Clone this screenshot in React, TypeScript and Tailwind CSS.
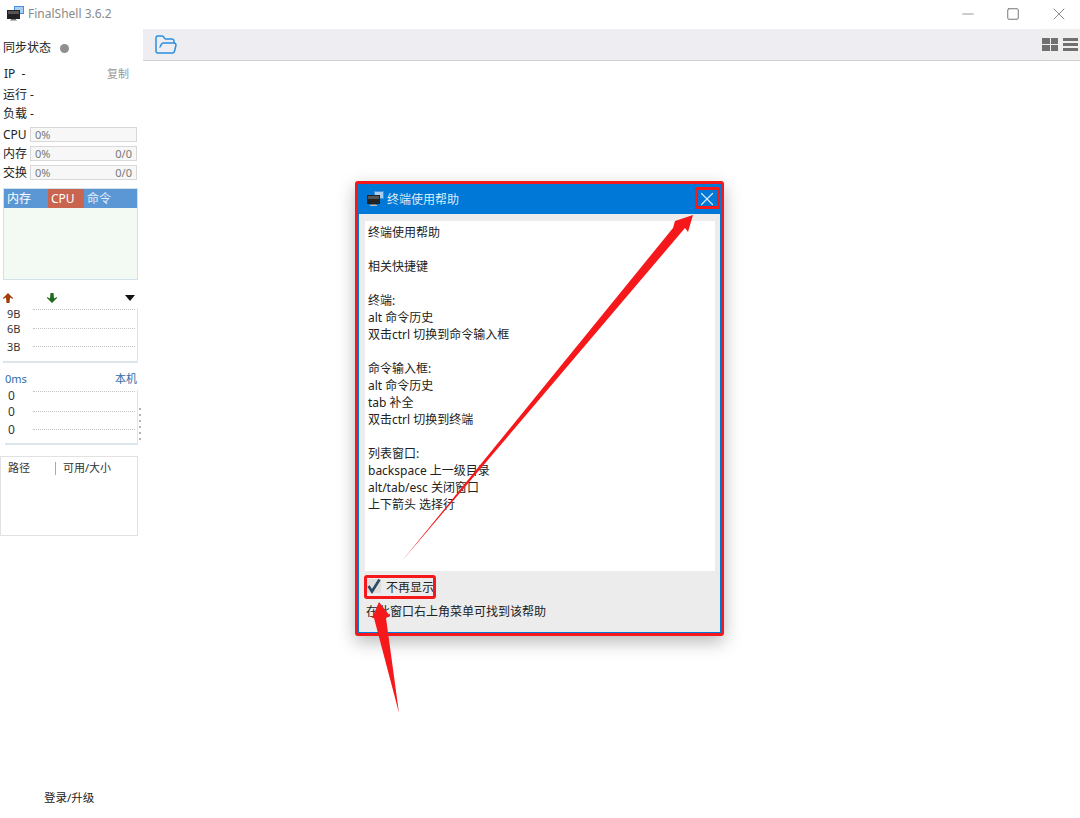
import { Minus, Square, X, FolderOpen } from "lucide-react";

const FONT = "[font-family:'Noto_Sans','Noto_Sans_CJK_SC',sans-serif]";

function MonitorIcon() {
  return (
    <svg width="17" height="16" viewBox="0 0 17 16" className="shrink-0">
      <rect x="7" y="0" width="10" height="8" fill="#4a90d9" />
      <rect x="8" y="1" width="8" height="6" fill="#a9d0f2" />
      <rect x="0" y="4" width="13" height="9" fill="#222" />
      <rect x="1" y="5" width="11" height="3" fill="#555" />
      <rect x="4" y="13" width="5" height="1" fill="#777" />
      <rect x="3" y="14" width="7" height="1" fill="#bbb" />
    </svg>
  );
}

function UsageBar({ label, right }: { label: string; right?: string }) {
  return (
    <div className="flex items-center h-[15px] mb-1">
      <span className="w-[27px] text-[12px] text-[#222] leading-none">{label}</span>
      <div className="w-[107px] h-[15px] border border-[#d8d8d8] bg-[#f7f7f7] flex items-center justify-between px-1 text-[11px] text-[#777] leading-none">
        <span>0%</span>
        {right && <span>{right}</span>}
      </div>
    </div>
  );
}

function ChartRow({ label, height, labelClass, labelWidth }: { label: string; height: string; labelClass: string; labelWidth: string }) {
  return (
    <div className={`flex ${height}`}>
      <span className={`${labelWidth} ${labelClass} h-[12px] leading-[12px]`}>{label}</span>
      <div className="flex-1 mr-[2px] border-t border-dotted border-[#c4c4c4]" />
    </div>
  );
}

function Sidebar() {
  return (
    <aside className="w-[143px] shrink-0 flex flex-col relative">
      <div className="h-[35px] pt-[3px] pl-[3px] flex items-center text-[12px] text-[#222]">
        同步状态
        <span className="ml-[9px] w-[9px] h-[9px] rounded-full bg-[#8f8f8f]" />
      </div>
      <div className="h-[20px] pl-[4px] pr-[14px] flex items-center justify-between text-[12px] text-[#222]">
        <span>IP&nbsp;&nbsp;-</span>
        <span className="text-[#999] text-[11px]">复制</span>
      </div>
      <div className="h-[22px] pl-[3px] flex items-center text-[12px] text-[#222]">运行 -</div>
      <div className="h-[15px] pl-[3px] flex items-center text-[12px] text-[#222]">负载 -</div>
      <div className="pl-[3px] mt-[6px]">
        <UsageBar label="CPU" />
        <UsageBar label="内存" right="0/0" />
        <UsageBar label="交换" right="0/0" />
      </div>

      {/* process table */}
      <div className="ml-[3px] w-[135px] h-[92px] mt-[4px] border border-[#d3e2ea] bg-[#f3f9f3]">
        <div className="h-[19px] bg-[#5b97d5] flex text-[12px] text-white leading-[19px]">
          <span className="w-[44px] pl-[3px]">内存</span>
          <span className="w-[36px] bg-[#c9644f] pl-[3px]">CPU</span>
          <span className="pl-[3px] text-[#e4f0fa]">命令</span>
        </div>
      </div>

      {/* network */}
      <div className="h-[18px] mt-[9px] flex items-center">
        <svg width="12" height="12" viewBox="0 0 12 12" className="ml-[2px]">
          <path d="M6 1 L11 6 L11 7 L8 5.5 L7.5 11 L4.5 11 L4 5.5 L1 7 L1 6 Z" fill="#a33a08" />
        </svg>
        <svg width="12" height="12" viewBox="0 0 12 12" className="ml-[32px]">
          <path d="M6 11 L11 6 L11 5 L8 6.5 L7.5 1 L4.5 1 L4 6.5 L1 5 L1 6 Z" fill="#1f6a1f" />
        </svg>
        <svg width="10" height="6" viewBox="0 0 10 6" className="ml-[67px]">
          <path d="M0 0 H10 L5 6 Z" fill="#111" />
        </svg>
      </div>
      <div className="ml-[3px] w-[135px] h-[55px] mt-[1px] pt-[1px] border-r border-b-2 border-[#dbe5ea] text-[11px] text-[#333]">
        <ChartRow label="9B" height="h-[19px]" labelWidth="w-[30px]" labelClass="pl-[4px] -mt-[1px]" />
        <ChartRow label="6B" height="h-[18px]" labelWidth="w-[30px]" labelClass="pl-[4px] -mt-[5px]" />
        <ChartRow label="3B" height="h-[15px]" labelWidth="w-[30px]" labelClass="pl-[4px] -mt-[5px]" />
      </div>

      {/* ping */}
      <div className="h-[18px] mt-[7px] pl-[5px] pr-[6px] flex items-center justify-between text-[11px] text-[#2f6da8]">
        <span>0ms</span>
        <span>本机</span>
      </div>
      <div className="ml-[5px] w-[133px] h-[55px] mt-[2px] pt-[1px] border-r border-b-2 border-[#dbe5ea] text-[12px] text-[#333]">
        <ChartRow label="0" height="h-[20px]" labelWidth="w-[28px]" labelClass="pl-[3px] -mt-[1px]" />
        <ChartRow label="0" height="h-[18px]" labelWidth="w-[28px]" labelClass="pl-[3px] -mt-[5px]" />
        <ChartRow label="0" height="h-[14px]" labelWidth="w-[28px]" labelClass="pl-[3px] -mt-[5px]" />
      </div>

      {/* drag handle */}
      <div className="absolute left-[139px] top-[379px] flex flex-col gap-[4px]">
        {[0, 1, 2, 3, 4, 5].map((i) => (
          <span key={i} className="w-[2px] h-[2px] bg-[#b4b4b4]" />
        ))}
      </div>

      {/* disk table */}
      <div className="w-[138px] h-[80px] mt-[11px] border border-[#e2e2e2] pt-[4px]">
        <div className="flex items-center h-[14px] text-[11px] text-[#333]">
          <span className="w-[54px] pl-[7px]">路径</span>
          <span className="h-[13px] border-l border-[#aaa]" />
          <span className="pl-[7px]">可用/大小</span>
        </div>
      </div>

      <div className="mt-auto h-[40px] pl-[44px] flex items-center text-[11.5px] text-[#222]">登录/升级</div>
    </aside>
  );
}

const HELP = `终端使用帮助

相关快捷键

终端:
alt 命令历史
双击ctrl 切换到命令输入框

命令输入框:
alt 命令历史
tab 补全
双击ctrl 切换到终端

列表窗口:
backspace 上一级目录
alt/tab/esc 关闭窗口
上下箭头 选择行`;

function HelpDialog() {
  return (
    <div className="absolute left-[355px] top-[181px] w-[369px] h-[455px] border-[3px] border-[#f5191b] rounded-[3px] shadow-[0_6px_18px_rgba(0,0,0,0.28)] bg-[#ececec] flex flex-col">
      <div className="flex-1 flex flex-col border-x border-b border-[#0078d7]">
        <div className="h-[30px] bg-[#0078d7] flex items-center pl-[8px] pr-[2px] text-[12px] text-[#dcecf9]">
          <MonitorIcon />
          <span className="ml-[3px] mt-[2px]">终端使用帮助</span>
          <X className="ml-auto text-[#d5e8f7]" size={22} strokeWidth={1.3} />
        </div>
        <div className="mt-[7px] ml-[6px] mr-[5px] h-[350px] bg-white pl-[3px] pt-[3px] text-[12px] leading-[17px] text-[#222] whitespace-pre">
          {HELP}
        </div>
        <div className="pl-[8px] flex items-center h-[30px] text-[12px] text-[#222]">
          <span className="relative w-[14px] h-[14px] bg-[#dedede] shrink-0">
            <svg width="16" height="16" viewBox="0 0 16 16" className="absolute -top-[1px] -left-[1px]">
              <path d="M2.5 8 L6 13.5 L13.5 1.5" fill="none" stroke="#2c4a63" strokeWidth="2.6" />
            </svg>
          </span>
          <span className="ml-[5px] mt-[3px]">不再显示</span>
        </div>
        <div className="pl-[7px] mt-[2px] text-[12px] leading-[17px] text-[#222]">在此窗口右上角菜单可找到该帮助</div>
      </div>
    </div>
  );
}

function Annotations() {
  return (
    <>
      <div className="absolute left-[364px] top-[575px] w-[72px] h-[24px] border-[3px] border-[#f5191b] rounded-[3px]" />
      <div className="absolute left-[695px] top-[187px] w-[25px] h-[22px] border-[3px] border-[#f5191b] rounded-[2px]" />
      <svg className="absolute left-0 top-0 pointer-events-none" width="1080" height="818">
        <polygon points="693,215 675,221 673,228 402,561 685,228 688,232" fill="#f5191b" />
        <polygon points="379,602 372,618 374,618 399,713 386,618 390,616" fill="#f5191b" />
      </svg>
    </>
  );
}

export default function App() {
  return (
    <div className={`relative w-[1080px] h-[818px] overflow-hidden bg-white flex flex-col ${FONT}`}>
      {/* title bar */}
      <header className="h-[29px] shrink-0 flex items-center pl-[7px] pb-[2px] text-[12px] text-[#8a8a8a]">
        <MonitorIcon />
        <span className="ml-[4px]">FinalShell 3.6.2</span>
        <div className="ml-auto flex items-center text-[#777]">
          <Minus size={18} strokeWidth={1} className="mr-[29px]" />
          <Square size={14} strokeWidth={1} absoluteStrokeWidth className="mr-[29px]" />
          <X size={20} strokeWidth={1} className="mr-[11px]" />
        </div>
      </header>

      <div className="flex-1 flex min-h-0">
        <Sidebar />
        <main className="flex-1 min-w-0">
          <div className="h-[32px] bg-[#eeeef2] border-b border-[#d2d2d2] flex items-center pl-[11px]">
            <FolderOpen size={24} strokeWidth={1.5} className="text-[#2a8fe0]" />
            <div className="ml-auto w-[39px] h-full bg-[#efefef] flex items-center justify-end gap-[5px] pr-[2px]">
              <div className="grid grid-cols-2 gap-[1px] w-[16px]">
                <span className="h-[6px] bg-[#707070]" />
                <span className="h-[6px] bg-[#707070]" />
                <span className="h-[6px] bg-[#707070]" />
                <span className="h-[6px] bg-[#707070]" />
              </div>
              <div className="flex flex-col gap-[2px] w-[15px]">
                <span className="h-[3px] bg-[#707070]" />
                <span className="h-[3px] bg-[#707070]" />
                <span className="h-[3px] bg-[#707070]" />
              </div>
            </div>
          </div>
        </main>
      </div>

      <HelpDialog />
      <Annotations />
    </div>
  );
}
